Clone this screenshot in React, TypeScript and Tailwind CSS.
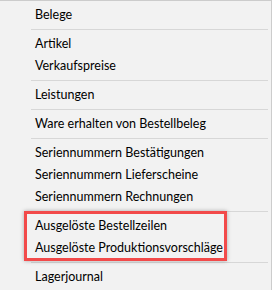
const groups: string[][] = [
  ['Belege'],
  ['Artikel', 'Verkaufspreise'],
  ['Leistungen'],
  ['Ware erhalten von Bestellbeleg'],
  ['Seriennummern Bestätigungen', 'Seriennummern Lieferscheine', 'Seriennummern Rechnungen'],
  ['Ausgelöste Bestellzeilen', 'Ausgelöste Produktionsvorschläge'],
  ['Lagerjournal'],
]

function Item({ label }: { label: string }) {
  return (
    <div className="h-[22px] flex items-center pl-[35px] text-[12.5px] text-black leading-none">{label}</div>
  )
}

export default function App() {
  return (
    <div
      className="w-[272px] h-[290px] bg-[#f2f2f2] border-t border-r border-[#cccccc] pt-[3px] overflow-hidden"
      style={{ fontFamily: 'Lato, "Noto Sans", sans-serif' }}
    >
      {groups.map((g, i) => (
        <div key={i}>
          {i > 0 && (
            <div className="py-[3px] pl-[31px] pr-[3px]">
              <div className="h-px bg-[#d7d7d7]" />
            </div>
          )}
          <div className="relative">
            {g.map(label => <Item key={label} label={label} />)}
            {/* highlight frame around the "Ausgelöste" entries */}
            {i === 5 && (
              <div className="absolute left-[24px] w-[203px] -top-[4px] -bottom-[2px] border-[3px] border-[#f24a4a] shadow-[0_0_4px_rgba(0,0,0,0.3)]" />
            )}
          </div>
        </div>
      ))}
    </div>
  )
}
